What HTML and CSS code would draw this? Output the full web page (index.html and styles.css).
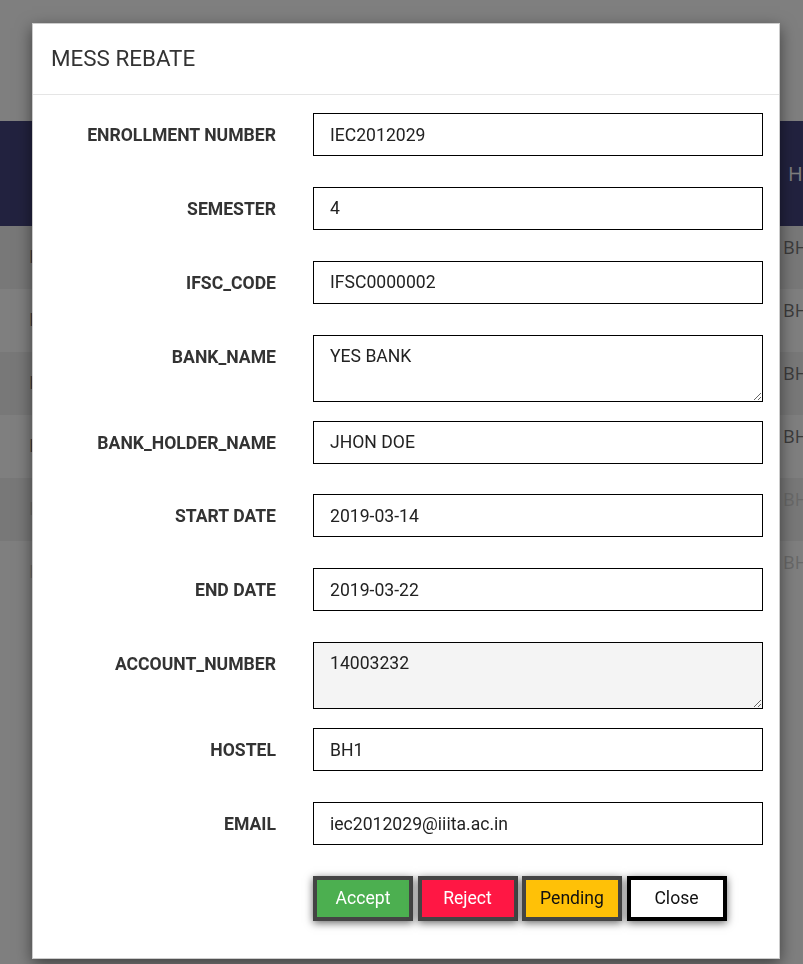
FILE: index.html
```html
<!DOCTYPE html>
<html lang="en">
<head>
<meta charset="utf-8">
<title>Mess Rebate</title>
<link rel="stylesheet" href="styles.css">
</head>
<body>
<div class="page">
  <div class="topbar"></div>
  <div class="list">
    <div class="list-head"><span class="c1"></span><span class="c2">Hostel</span></div>
    <div class="list-row odd"><span class="c1">IEC</span><span class="c2">BH1</span></div>
    <div class="list-row"><span class="c1">IEC</span><span class="c2">BH1</span></div>
    <div class="list-row odd"><span class="c1">IEC</span><span class="c2">BH2</span></div>
    <div class="list-row"><span class="c1">IEC</span><span class="c2">BH1</span></div>
    <div class="list-row odd faded"><span class="c1">IEC</span><span class="c2">BH3</span></div>
    <div class="list-row faded"><span class="c1">IEC</span><span class="c2">BH1</span></div>
  </div>
</div>
<div class="backdrop"></div>
<div class="modal">
  <div class="modal-header"><h4 class="modal-title">MESS REBATE</h4></div>
  <form class="modal-body">
    <label class="lbl">ENROLLMENT NUMBER</label>
    <input class="field" type="text" value="IEC2012029">
    <label class="lbl">SEMESTER</label>
    <input class="field" type="text" value="4">
    <label class="lbl">IFSC_CODE</label>
    <input class="field" type="text" value="IFSC0000002">
    <label class="lbl">BANK_NAME</label>
    <textarea class="field area">YES BANK</textarea>
    <label class="lbl">BANK_HOLDER_NAME</label>
    <input class="field" type="text" value="JHON DOE">
    <label class="lbl">START DATE</label>
    <input class="field" type="text" value="2019-03-14">
    <label class="lbl">END DATE</label>
    <input class="field" type="text" value="2019-03-22">
    <label class="lbl">ACCOUNT_NUMBER</label>
    <textarea class="field area readonly" readonly>14003232</textarea>
    <label class="lbl">HOSTEL</label>
    <input class="field" type="text" value="BH1">
    <label class="lbl">EMAIL</label>
    <input class="field" type="text" value="iec2012029@iiita.ac.in">
    <div class="actions">
      <button type="button" class="btn accept">Accept</button>
      <button type="button" class="btn reject">Reject</button>
      <button type="button" class="btn pending">Pending</button>
      <button type="button" class="btn close">Close</button>
    </div>
  </form>
</div>
</body>
</html>
```
FILE: styles.css
```css
html, body {
  margin: 0;
  padding: 0;
  background: #fff;
  overflow: hidden;
}
body {
  font-family: Roboto, "Liberation Sans", sans-serif;
  width: 803px;
  height: 964px;
}
.page {
  width: 803px;
}
.topbar {
  height: 121px;
  background: #fff;
}
.list-head,
.list-row {
  display: grid;
  grid-template-columns: 754px 1fr;
  padding-left: 29px;
  font-family: "Open Sans", "DejaVu Sans", sans-serif;
  font-size: 18px;
  line-height: 24px;
  white-space: nowrap;
  overflow: hidden;
}
.list-head {
  height: 105px;
  background: #44447e;
  color: #fff;
  align-items: center;
}
.list-head .c2 {
  padding-left: 5px;
  font-size: 20px;
}
.list-row {
  height: 63px;
  background: #fff;
  color: #777;
}
.list-row.odd {
  background: #f0f0f0;
}
.list-row .c1 {
  padding-top: 18px;
}
.list-row .c2 {
  padding-top: 9px;
}
.list-row.faded {
  color: #d0d0d0;
}
.backdrop {
  position: fixed;
  inset: 0;
  background: rgba(0, 0, 0, 0.5);
}
.modal {
  position: absolute;
  left: 32px;
  top: 23px;
  width: 748px;
  box-sizing: border-box;
  background: #fff;
  border: 1px solid rgba(0, 0, 0, 0.2);
  box-shadow: 0 5px 15px rgba(0, 0, 0, 0.5);
}
.modal-header {
  height: 71px;
  box-sizing: border-box;
  padding: 22px 18px 24px;
  border-bottom: 1px solid #e5e5e5;
}
.modal-title {
  margin: 0;
  font-size: 22.4px;
  line-height: 24px;
  font-weight: 400;
  color: #333;
}
.modal-body {
  display: grid;
  grid-template-columns: 243px 450px;
  column-gap: 37px;
  row-gap: 18.9px;
  align-items: start;
  padding: 18px 16px 37px 0;
  margin: 0;
}
.lbl {
  height: 55px;
  box-sizing: border-box;
  padding-top: 10px;
  text-align: right;
  font-size: 17.6px;
  line-height: 24px;
  font-weight: 700;
  color: #333;
}
.field {
  display: block;
  width: 450px;
  height: 43px;
  box-sizing: border-box;
  margin: 0;
  border: 1px solid #000;
  border-radius: 0;
  padding: 0 16px;
  font-family: Roboto, "Liberation Sans", sans-serif;
  font-size: 17.6px;
  color: #222;
  background: #fff;
  outline: none;
}
.area {
  height: 67px;
  padding: 8px 16px;
  line-height: 24px;
}
.readonly {
  background: #f4f4f4;
}
.actions {
  grid-column: 2;
  display: flex;
  gap: 4.5px;
}
.btn {
  width: 100px;
  height: 45px;
  box-sizing: border-box;
  border: 4px solid #444;
  border-radius: 0;
  padding: 0 0 1px;
  font-family: Roboto, "Liberation Sans", sans-serif;
  font-size: 17.6px;
  line-height: 24px;
  box-shadow: 0 2px 8px rgba(0, 0, 0, 0.6);
  cursor: pointer;
}
.accept {
  background: #4caf50;
  color: #fff;
}
.reject {
  background: #ff1744;
  color: #fff;
}
.pending {
  background: #ffc107;
  color: #111;
}
.close {
  background: #fff;
  color: #111;
  border-color: #000;
}
```
